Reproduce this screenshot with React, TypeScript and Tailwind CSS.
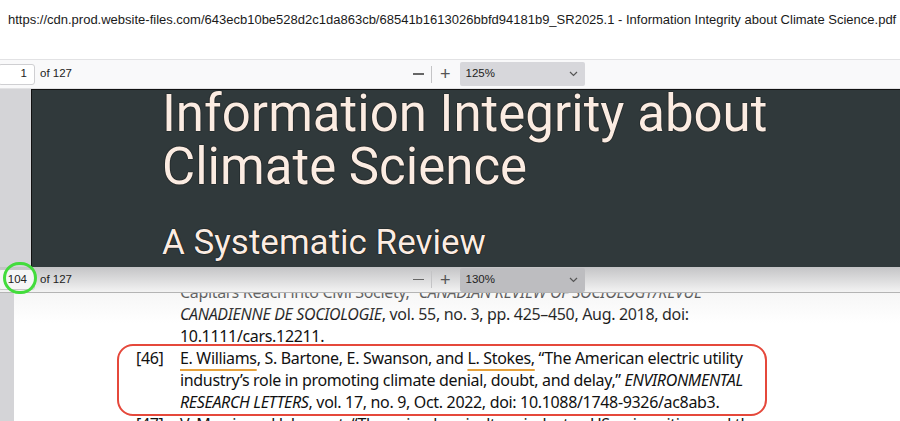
import React from 'react';

const ui = "font-['Liberation_Sans',Arial,sans-serif]";

interface ToolbarProps {
  page: string;
  zoom: string;
  shaded?: boolean;
}

const Chevron = () => (
  <svg width="9" height="6" viewBox="0 0 9 6" className="ml-auto mr-[7px]">
    <path d="M1 1l3.5 3.5L8 1" fill="none" stroke="#555" strokeWidth="1.2" />
  </svg>
);

const Toolbar: React.FC<ToolbarProps> = ({ page, zoom, shaded }) => (
  <div
    className={`flex items-center text-[11.5px] text-[#222] ${ui} ${
      shaded
        ? 'h-[26px] bg-linear-to-b from-[#c4c4c6] to-[#f3f3f3] border-b border-[#b4b4b4]'
        : 'h-[30px] bg-[#f9f9fa] border-t border-[#e2e2e4] border-b border-[#d0d0d3]'
    }`}
  >
    <div className="w-[413px] flex items-center">
      <div
        className={`-ml-[2px] w-[37px] h-[21px] flex items-center justify-end pr-[7px] rounded-[3px] border ${
          shaded ? 'border-[#c8c8c8] bg-[#f6f6f6]' : 'border-[#cfcfd2] bg-white'
        }`}
      >
        {page}
      </div>
      <span className="ml-[5px]">of 127</span>
    </div>
    <div className="flex items-center">
      <span className="w-[11px] h-[1.5px] bg-[#666]" />
      <span className="ml-[7px] w-px h-[17px] bg-[#c4c4c6]" />
      <span className="ml-[8px] text-[18px] leading-[18px] text-[#555] font-light">+</span>
      <div
        className={`ml-[9px] w-[125px] h-[24px] flex items-center pl-[6px] rounded-[2px] ${
          shaded ? 'bg-[#bdbdc0]' : 'bg-[#d7d7db]'
        }`}
      >
        {zoom}
        <Chevron />
      </div>
    </div>
  </div>
);

const App: React.FC = () => {
  return (
    <div className="relative w-[900px] h-[421px] overflow-hidden bg-white">
      {/* Window title */}
      <div className={`h-[59px] pl-[8px] pt-[10px] text-[13px] text-[#1a1a1a] whitespace-nowrap ${ui}`}>
        https://cdn.prod.website-files.com/643ecb10be528d2c1da863cb/68541b1613026bbfd94181b9_SR2025.1 - Information Integrity about Climate Science.pdf
      </div>

      <Toolbar page="1" zoom="125%" />

      {/* Cover page */}
      <div className="flex h-[178px]">
        <div className="w-[31px] bg-[#d4d4d7]" />
        <div className="flex-1 bg-[#30393b] border-t border-l border-[#111] pl-[130px] overflow-hidden font-['Roboto',sans-serif] text-[#fbece2] [text-shadow:0_0_1px_#000,0_0_1px_#000]">
          <div className="-mt-[3px] text-[51px] leading-[53px] whitespace-nowrap">
            <div>Information Integrity about</div>
            <div>Climate Science</div>
          </div>
          <div className="mt-[30px] text-[35px] leading-[40px] whitespace-nowrap">A Systematic Review</div>
        </div>
      </div>

      <Toolbar page="104" zoom="130%" shaded />

      {/* Reference page */}
      <div className="flex h-[128px]">
        <div className="w-[14px] bg-[#d4d4d7]" />
        <div className="relative flex-1 bg-white overflow-hidden font-['Noto_Sans',sans-serif] text-[16px] leading-[22px] tracking-[-0.33px] text-[#111]">
          <div className="-mt-[12px] pl-[166px] whitespace-nowrap">
            <div>
              Capital’s Reach into Civil Society,” <i>CANADIAN REVIEW OF SOCIOLOGY/REVUE</i>
            </div>
            <div>
              <i>CANADIENNE DE SOCIOLOGIE</i>, vol. 55, no. 3, pp. 425–450, Aug. 2018, doi:
            </div>
            <div>10.1111/cars.12211.</div>
          </div>
          <div className="relative whitespace-nowrap">
            <div className="absolute -top-[3px] -bottom-[3px] left-[103px] w-[650px] rounded-[16px] border-2 border-[#e5483b]" />
            <div className="flex">
              <span className="w-[166px] pl-[122px]">[46]</span>
              <span>
                <span className="underline decoration-[#e6a23c] decoration-2 underline-offset-[5px]">E. Williams</span>, S.
                Bartone, E. Swanson, and{' '}
                <span className="underline decoration-[#e6a23c] decoration-2 underline-offset-[5px]">L. Stokes,</span> “The
                American electric utility
              </span>
            </div>
            <div className="pl-[166px]">
              industry’s role in promoting climate denial, doubt, and delay,” <i>ENVIRONMENTAL</i>
            </div>
            <div className="pl-[166px]">
              <i>RESEARCH LETTERS</i>, vol. 17, no. 9, Oct. 2022, doi: 10.1088/1748-9326/ac8ab3.
            </div>
          </div>
          <div className="flex whitespace-nowrap">
            <span className="w-[166px] pl-[122px]">[47]</span>
            <span>V. Morris and J. Jacquet, “The animal agriculture industry, US universities, and the</span>
          </div>
          <div className="pointer-events-none absolute inset-x-0 top-0 h-[30px] bg-linear-to-b from-[#e9e9e9]/40 to-transparent" />
        </div>
      </div>

      {/* Highlight circle on page number */}
      <div className="pointer-events-none absolute left-[3px] top-[262px] w-[34px] h-[32px] rounded-full border-[3px] border-[#43dc3c]" />
    </div>
  );
};

export default App;
